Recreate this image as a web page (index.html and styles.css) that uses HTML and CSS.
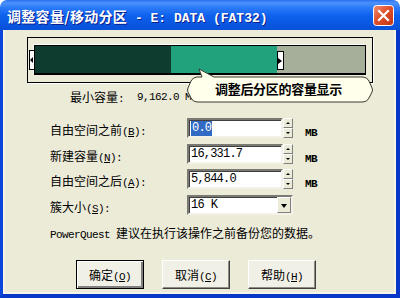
FILE: index.html
```html
<!DOCTYPE html>
<html>
<head>
<meta charset="utf-8">
<link rel="stylesheet" href="styles.css">
</head>
<body>
<div class="window">
  <div class="titlebar">
    <span class="title">调整容量/移动分区<span class="title-lat"> - E: DATA (FAT32)</span></span>
    <span class="close">
      <svg width="21" height="21" viewBox="0 0 21 21">
        <defs>
          <linearGradient id="cg" x1="0" y1="0" x2="1" y2="1">
            <stop offset="0" stop-color="#F0937A"/>
            <stop offset="0.45" stop-color="#E0502C"/>
            <stop offset="1" stop-color="#C23312"/>
          </linearGradient>
        </defs>
        <rect x="0.5" y="0.5" width="20" height="20" rx="3" fill="url(#cg)" stroke="#FFFFFF"/>
        <path d="M6 6 L15 15 M15 6 L6 15" stroke="#FFFFFF" stroke-width="2.2" stroke-linecap="square"/>
      </svg>
    </span>
  </div>
  <div class="client">
    <div class="partition">
      <div class="bar">
        <div class="seg seg-used" style="width:136px"></div>
        <div class="seg seg-new" style="width:106px"></div>
        <div class="seg seg-free"></div>
      </div>
      <span class="handle handle-left"></span>
      <span class="handle handle-right"></span>
    </div>

    <div class="minrow">
      <span>最小容量<span class="lat">:</span></span>
      <span class="lat minval">9,162.0 MB</span>
    </div>

    <div class="callout">
      <svg class="callout-shape" width="192" height="40" viewBox="0 0 192 40">
        <path d="M12 11 L17 11 L14 3 L29 11 L178 11 Q182 11 184 15 L187 22 Q188 24 187 26 L184 32 Q182 36 178 36 L12 36 Q8 36 6 32 L3 26 Q2 24 3 22 L6 15 Q8 11 12 11 Z" fill="#FFFFEC" stroke="#3A3A30" stroke-width="1"/>
      </svg>
      <span class="callout-text">调整后分区的容量显示</span>
    </div>

    <div class="form">
      <label class="lbl">自由空间之前<span class="lat">(<u>B</u>):</span></label>
      <div class="field"><span class="sel">0.0</span></div>
      <div class="spin"><span class="spin-up"></span><span class="spin-down"></span></div>
      <span class="unit lat">MB</span>

      <label class="lbl">新建容量<span class="lat">(<u>N</u>):</span></label>
      <div class="field">16,331.7</div>
      <div class="spin"><span class="spin-up"></span><span class="spin-down"></span></div>
      <span class="unit lat">MB</span>

      <label class="lbl">自由空间之后<span class="lat">(<u>A</u>):</span></label>
      <div class="field">5,844.0</div>
      <div class="spin"><span class="spin-up"></span><span class="spin-down"></span></div>
      <span class="unit lat">MB</span>

      <label class="lbl">簇大小<span class="lat">(<u>S</u>):</span></label>
      <div class="combo"><span class="combo-val">16 K</span><span class="combo-btn"></span></div>
    </div>

    <p class="note"><span class="lat">PowerQuest </span>建议在执行该操作之前备份您的数据。</p>

    <div class="buttons">
      <button class="btn btn-default">确定<span class="lat">(<u>O</u>)</span></button>
      <button class="btn">取消<span class="lat">(<u>C</u>)</span></button>
      <button class="btn">帮助<span class="lat">(<u>H</u>)</span></button>
    </div>
  </div>
</div>
</body>
</html>
```

FILE: styles.css
```css
* { box-sizing: border-box; }
html, body { margin: 0; padding: 0; }
body {
  width: 400px;
  height: 298px;
  overflow: hidden;
  background: #FFFFFF;
  font-family: "Noto Sans CJK SC", sans-serif;
  font-size: 12px;
  color: #000;
}

.window {
  width: 400px;
  height: 298px;
  display: flex;
  flex-direction: column;
}

/* ---------- title bar ---------- */
.titlebar {
  height: 30px;
  flex: none;
  display: flex;
  align-items: center;
  justify-content: space-between;
  padding: 2px 6px 0 7px;
  border-radius: 7px 7px 0 0;
  background: linear-gradient(to bottom, #2A6FF0 0%, #4D92FB 10%, #2C7BF8 25%, #0F63EE 50%, #0A58E4 75%, #0850D8 100%);
}
.title {
  color: #FFFFFF;
  font-weight: bold;
  font-size: 14px;
  letter-spacing: 0.3px;
  text-shadow: 1px 1px 0 #0A1E8C;
  white-space: pre;
}
.title-lat {
  font-family: "Liberation Mono", monospace;
  font-size: 13px;
  letter-spacing: 0;
}
.close {
  width: 21px;
  height: 21px;
  display: block;
  margin-top: -1px;
}
.close svg { display: block; }

/* ---------- client / frame ---------- */
.client {
  flex: 1;
  position: relative;
  background: #ECEBD8;
  border-left: 3px solid #0B47DA;
  border-right: 4px solid #0838C8;
  border-bottom: 4px solid #0838C8;
  box-shadow: inset 2px 0 0 #F6F4E6, inset -2px -2px 0 #F6F4E6;
  display: flex;
  flex-direction: column;
}

.lat {
  font-family: "Liberation Mono", monospace;
  font-size: 11px;
  letter-spacing: -0.6px;
}

/* ---------- partition graphic ---------- */
.partition {
  position: relative;
  margin: 7px 0 0 24px;
  width: 346px;
  height: 46px;
  border: 1px solid #000;
  box-shadow: 1px 1px 0 #FFFFFF;
  flex: none;
}
.bar {
  margin: 7px 0 0 6px;
  width: 332px;
  height: 30px;
  display: flex;
  border: 1px solid #000;
  border-bottom-width: 2px;
  box-shadow: -1px -1px 0 #FFFFFF;
}
.seg { height: 100%; }
.seg-used { background: #0E3D30; }
.seg-new { background: #22A17D; }
.seg-free { flex: 1; background: #A6AF99; }

.handle {
  position: absolute;
  background: #FFFFFF;
  border: 1px solid #000;
}
.handle::after {
  content: "";
  position: absolute;
  top: 50%;
  width: 0;
  height: 0;
  border-top: 3px solid transparent;
  border-bottom: 3px solid transparent;
  transform: translateY(-50%);
}
.handle-left {
  left: 1px;
  top: 12px;
  width: 6px;
  height: 20px;
}
.handle-left::after {
  left: 0;
  border-right: 3px solid #000;
}
.handle-right {
  left: 249px;
  top: 13px;
  width: 7px;
  height: 19px;
}
.handle-right::after {
  left: 0;
  border-left: 4px solid #000;
}

/* ---------- min size row ---------- */
.minrow {
  margin: 6px 0 0 67px;
  height: 16px;
  line-height: 16px;
  display: flex;
  gap: 13px;
  white-space: pre;
}
.minval { font-size: 11px; }

/* ---------- callout ---------- */
.callout {
  position: absolute;
  left: 182px;
  top: 36px;
  width: 192px;
  height: 40px;
}
.callout-shape {
  position: absolute;
  left: 0;
  top: 0;
  display: block;
}
.callout-text {
  position: absolute;
  left: 30px;
  top: 14px;
  line-height: 18px;
  font-size: 13px;
  font-weight: bold;
  letter-spacing: -0.3px;
  color: #000;
}

/* ---------- form ---------- */
.form {
  margin: 13px 0 0 47px;
  display: grid;
  grid-template-columns: 137px 96px 10px auto;
  grid-auto-rows: 20px;
  row-gap: 5.5px;
  align-items: center;
}
.lbl {
  align-self: end;
  line-height: 16px;
  margin-bottom: -2px;
  white-space: pre;
}
.lbl u, .btn u { text-decoration: underline; }

.field {
  height: 20px;
  background: #FFFFFF;
  border: 2px solid;
  border-color: #7A7A72 #F4F2E8 #F4F2E8 #7A7A72;
  box-shadow: inset 1px 1px 0 #404040;
  padding: 0 2px;
  font-family: "Liberation Mono", monospace;
  font-size: 12px;
  letter-spacing: -0.8px;
  line-height: 16px;
  white-space: pre;
}
.sel {
  display: inline-block;
  background: #316AC5;
  color: #FFFFFF;
  padding: 0 1px;
  line-height: 15px;
  margin-top: 0;
}
.spin {
  height: 20px;
  display: flex;
  flex-direction: column;
}
.spin span {
  flex: 1;
  position: relative;
  background: #ECEBD8;
  border: 1px solid;
  border-color: #FFFFFF #808080 #808080 #FFFFFF;
}
.spin span::after {
  content: "";
  position: absolute;
  left: 2px;
  top: 3px;
  border-left: 2px solid transparent;
  border-right: 2px solid transparent;
}
.spin-up::after { border-bottom: 2px solid #000; }
.spin-down::after { border-top: 2px solid #000; }

.unit {
  align-self: end;
  margin: 0 0 -3px 12px;
  line-height: 16px;
  font-weight: bold;
}

.combo {
  grid-column: 2 / 4;
  height: 20px;
  background: #FFFFFF;
  border: 2px solid;
  border-color: #7A7A72 #F4F2E8 #F4F2E8 #7A7A72;
  box-shadow: inset 1px 1px 0 #404040;
  display: flex;
  align-items: stretch;
}
.combo-val {
  flex: 1;
  padding: 0 2px;
  font-family: "Liberation Mono", monospace;
  font-size: 12px;
  letter-spacing: -0.6px;
  line-height: 16px;
  white-space: pre;
}
.combo-btn {
  width: 14px;
  position: relative;
  background: #ECEBD8;
  border: 1px solid;
  border-color: #FFFFFF #808080 #808080 #FFFFFF;
}
.combo-btn::after {
  content: "";
  position: absolute;
  left: 3px;
  top: 6px;
  border-left: 3.5px solid transparent;
  border-right: 3.5px solid transparent;
  border-top: 4px solid #000;
}

/* ---------- note ---------- */
.note {
  margin: 10.5px 0 0 47px;
  line-height: 16px;
  white-space: pre;
}

/* ---------- buttons ---------- */
.buttons {
  margin: 17px 0 0 73px;
  display: flex;
  gap: 18px;
}
.btn {
  width: 68px;
  height: 29px;
  padding: 0;
  margin: 0;
  font-family: "Noto Sans CJK SC", sans-serif;
  font-size: 12px;
  color: #000;
  background: #F1F0E6;
  border: 1px solid;
  border-color: #FFFFFF #404040 #404040 #FFFFFF;
  box-shadow: inset -1px -1px 0 #8C8C84;
  white-space: pre;
}
.btn-default {
  border: 1px solid #000;
  box-shadow: inset 1px 1px 0 #FFFFFF, inset -2px -2px 0 #808080;
}
```
